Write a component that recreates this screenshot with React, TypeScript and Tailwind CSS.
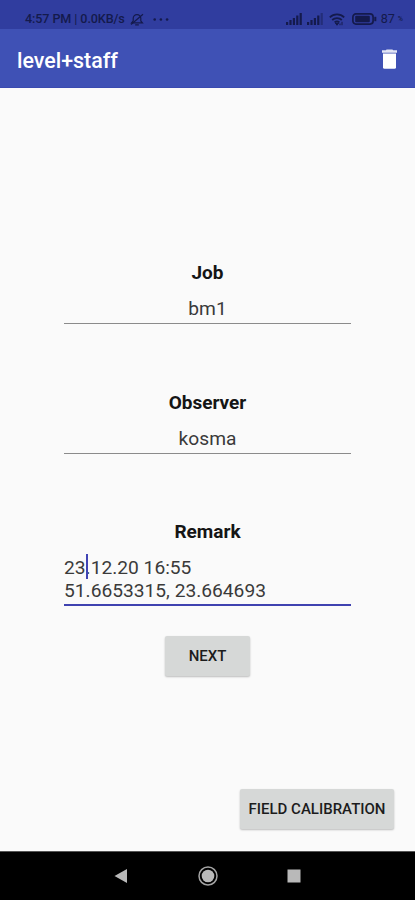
import React, { useState } from 'react';

function SignalIcon({ weak = false }: { weak?: boolean }) {
  return (
    <svg width="16" height="12" viewBox="0 0 16 12" fill="currentColor">
      <rect x="0" y="9" width="2.2" height="3" />
      <rect x="3.4" y="7" width="2.2" height="5" />
      <rect x="6.8" y="5" width="2.2" height="7" />
      <rect x="10.2" y="2.5" width="2.2" height="9.5" />
      <rect x="13.6" y="0" width="2.2" height="12" opacity={weak ? 0.45 : 1} />
    </svg>
  );
}

function MutedBellIcon() {
  return (
    <svg width="14" height="13" viewBox="0 0 14 13" fill="none" stroke="currentColor" strokeWidth="1.2">
      <path d="M1.6 9.8h10.8L10.8 8V5.2A3.6 3.6 0 0 0 7 1.6a3.6 3.6 0 0 0-3.8 3.6V8z" />
      <path d="M5.2 11.8h3.6M1 11.5 13 1.2" />
    </svg>
  );
}

function WifiIcon() {
  return (
    <svg width="16" height="13" viewBox="0 0 16 13" fill="none" stroke="currentColor" strokeWidth="1.8">
      <path d="M.8 4.3c4-3.8 10.4-3.8 14.4 0M3.2 7c2.7-2.5 6.9-2.5 9.6 0M5.6 9.4c1.4-1.2 3.4-1.2 4.8 0" />
      <path d="M6.4 10.2h3.2L8 12.2zM13 8.8v3.4M11 10.5v1.7" fill="currentColor" strokeWidth="1" />
    </svg>
  );
}

function BatteryIcon() {
  return (
    <svg width="25" height="12" viewBox="0 0 25 12" fill="none" stroke="currentColor">
      <rect x=".9" y=".9" width="20.2" height="10.2" rx="3" strokeWidth="1.7" />
      <rect x="3.2" y="2.8" width="14.6" height="6.4" rx="1" fill="currentColor" stroke="none" />
      <path d="M23.3 3.8v4.4" strokeWidth="2" />
    </svg>
  );
}

function StatusBar() {
  return (
    <div className="flex h-[29px] items-center bg-[#303d9f] pt-[9px] pr-[12px] pl-[25px] text-[12.6px] leading-none font-medium text-[#141a4c]">
      <span className="w-[103px] whitespace-nowrap tracking-[-0.1px]">
        4:57 PM <span className="font-normal">|</span> 0.0KB/s
      </span>
      <span className="ml-[2px]"><MutedBellIcon /></span>
      <svg className="ml-[9px]" width="16" height="3" viewBox="0 0 16 3" fill="currentColor">
        <circle cx="1.7" cy="1.5" r="1.3" />
        <circle cx="7.9" cy="1.5" r="1.3" />
        <circle cx="14.1" cy="1.5" r="1.3" />
      </svg>
      <div className="ml-auto flex items-center">
        <SignalIcon />
        <span className="ml-[5px]"><SignalIcon weak /></span>
        <span className="ml-[6px]"><WifiIcon /></span>
        <span className="ml-[7px]"><BatteryIcon /></span>
        <span className="ml-[4px] font-normal">87</span>
        <span className="ml-[3px] text-[7px]">%</span>
      </div>
    </div>
  );
}

function AppBar({ onClear }: { onClear: () => void }) {
  return (
    <header className="flex h-[59px] items-center justify-between border-b border-[#3a4ab0] bg-[#3f51b5] pr-[17px] pl-[17px] text-white">
      <h1 className="pt-[5px] text-[21.4px] leading-none font-medium">level+staff</h1>
      <button className="pt-[2px]" aria-label="Clear" onClick={onClear}>
        <svg width="17" height="20" viewBox="0 0 17 20" fill="currentColor">
          <path d="M1 1.2h3.8L5.6.4h5.8l.8.8H16v2.6H1z" opacity=".85" />
          <path d="M2 4.4h13v13.8a1.6 1.6 0 0 1-1.6 1.6H3.6A1.6 1.6 0 0 1 2 18.2z" />
        </svg>
      </button>
    </header>
  );
}

interface FieldProps {
  label: string;
  value: string;
  onChange: (value: string) => void;
}

function Field({ label, value, onChange }: FieldProps) {
  return (
    <label className="flex h-[129.7px] flex-col">
      <span className="text-center text-[19px] leading-[22px] font-bold text-[#151515]">{label}</span>
      <input
        className="mt-[11px] h-[29px] border-b border-[#8b8b8b] pb-[1px] text-center text-[19.2px] text-[#3a3a3a] outline-none"
        value={value}
        onChange={(e) => onChange(e.target.value)}
      />
    </label>
  );
}

function NavBar() {
  return (
    <nav className="flex h-[49px] items-center justify-center border-t border-[#555] bg-black">
      <svg width="188" height="22" viewBox="0 0 188 22" fill="#b9b9b9">
        <path d="M0.5 11 13 4v14z" />
        <circle cx="94" cy="11" r="6.3" />
        <circle cx="94" cy="11" r="9" fill="none" stroke="#a4a4a4" strokeWidth="1.5" />
        <rect x="173.5" y="4.5" width="13" height="13" />
      </svg>
    </nav>
  );
}

export default function App() {
  const [job, setJob] = useState('bm1');
  const [observer, setObserver] = useState('kosma');

  const handleClear = () => {
    setJob('');
    setObserver('');
  };

  return (
    <div className="flex h-[900px] w-[415px] flex-col overflow-hidden bg-[#fafafa] font-[Roboto,sans-serif]">
      <StatusBar />
      <AppBar onClear={handleClear} />

      <main className="flex flex-1 flex-col px-16 pt-[174px]">
        <Field label="Job" value={job} onChange={setJob} />
        <Field label="Observer" value={observer} onChange={setObserver} />

        <div className="text-center text-[19px] leading-[22px] font-bold text-[#151515]">Remark</div>
        <div className="mt-[14px] h-[48.6px] border-b-2 border-[#3f42b0] text-[19.2px] leading-[22.5px] whitespace-nowrap text-[#3a3a3a]">
          <div>
            23
            <span className="relative">
              {/* text caret */}
              <span className="absolute -top-[2px] left-0 h-[25px] w-[2px] bg-[#4044b5]" />
              .
            </span>
            12.20 16:55
          </div>
          <div>51.6653315, 23.664693</div>
        </div>

        <button className="mt-[30.4px] h-[40px] w-[85px] self-center rounded-[2px] bg-[#d6d8d7] text-[15px] font-medium text-[#1c1c1c] shadow-[0_1px_2px_rgba(0,0,0,0.25)]">
          NEXT
        </button>
        <button className="mt-auto -mr-[43px] mb-[22px] h-[40px] w-[154px] self-end rounded-[2px] bg-[#d6d8d7] text-[15px] font-medium whitespace-nowrap text-[#1c1c1c] shadow-[0_1px_2px_rgba(0,0,0,0.25)]">
          FIELD CALIBRATION
        </button>
      </main>

      <NavBar />
    </div>
  );
}
